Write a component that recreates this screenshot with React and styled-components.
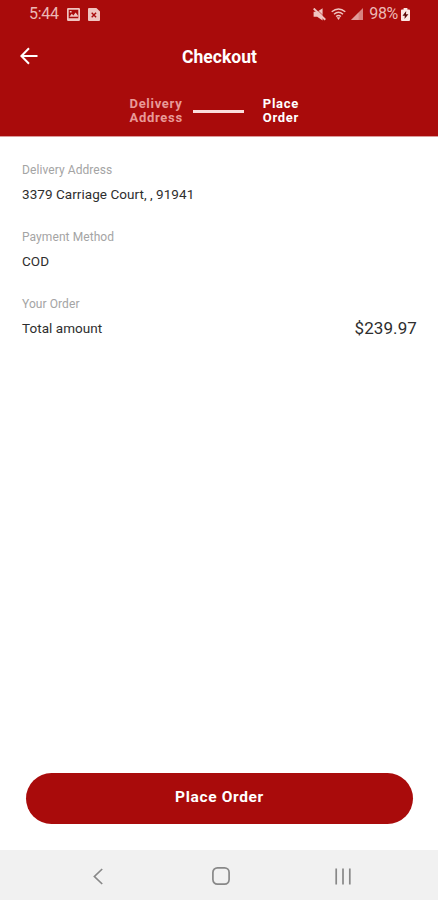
import React from 'react';
import styled, { createGlobalStyle } from 'styled-components';

const sections = [
  { id: 'address', title: 'Delivery Address', text: '3379 Carriage Court, , 91941' },
  { id: 'payment', title: 'Payment Method', text: 'COD' },
  { id: 'order', title: 'Your Order', text: 'Total amount', price: '$239.97' },
];

const StatusBar = () => (
  <StatusBarStyled>
    <StatusTextStyled>5:44</StatusTextStyled>
    <StatusIconStyled width="13" height="13" viewBox="0 0 13 13">
      <path
        fillRule="evenodd"
        d="M1.2 0h10.6A1.2 1.2 0 0 1 13 1.2v10.6a1.2 1.2 0 0 1-1.2 1.2H1.2A1.2 1.2 0 0 1 0 11.8V1.2A1.2 1.2 0 0 1 1.2 0zM1.7 1.7v8.6h9.6V1.7z"
      />
      <path d="M2.4 8.8 4.8 5.8l1.6 1.7 2.2-3 2.3 3v1.3zM2.8 3h1.8v1.6H2.8z" />
    </StatusIconStyled>
    <StatusIconStyled width="12" height="13" viewBox="0 0 12 13">
      <path d="M1 0h7.4L12 3.4V12a1 1 0 0 1-1 1H1a1 1 0 0 1-1-1V1a1 1 0 0 1 1-1z" />
      <path d="m3.7 4.8 4.4 4.4M8.1 4.8 3.7 9.2" stroke="#a90b0b" strokeWidth="1.4" />
    </StatusIconStyled>
    <StatusIconsStyled>
      <svg width="13" height="13" viewBox="0 0 13 13">
        <path d="M.6 3.8h3.6L9.6.2v12.300L4.200 8.800H.6z" />
        <path d="M2.200 0 13 10.400" stroke="#a90b0b" strokeWidth=".7" />
        <path d="M.7.5 12.300 11.700" stroke="#f0c4c0" strokeWidth="1.900" />
      </svg>
      <WifiIconStyled width="15" height="13" viewBox="0 0 15 13">
        <g fill="none" stroke="#f0c4c0" strokeWidth="1.4">
          <path d="M.7 3.8Q7.5-1.9 14.3 3.8" />
          <path d="M3 6.2Q7.5 2.2 12 6.2" />
          <path d="M5.1 8.5Q7.5 6.3 9.9 8.5" />
        </g>
        <path d="M5.6 9.3h3.8L7.5 12z" />
      </WifiIconStyled>
      <SignalIconStyled width="12" height="12" viewBox="0 0 12 12">
        <path d="M12 0v12H0z" opacity=".65" />
        <path d="M7.6 4.4V12H0z" opacity=".4" />
      </SignalIconStyled>
      <StatusTextStyled>98%</StatusTextStyled>
      <BatteryIconStyled width="9" height="13" viewBox="0 0 9 13">
        <path fill="#fbe6e3" d="M2.6 0h3.8v1.4H8a1 1 0 0 1 1 1V12a1 1 0 0 1-1 1H1a1 1 0 0 1-1-1V2.4a1 1 0 0 1 1-1h1.6z" />
        <path fill="#5c0808" d="M5.2 2.9 1.5 7.8h2.3L3.5 11l3.9-4.7H5z" />
      </BatteryIconStyled>
    </StatusIconsStyled>
  </StatusBarStyled>
);

const App = () => (
  <>
    <GlobalStyle />
    <ScreenStyled>
      <HeaderStyled>
        <StatusBar />
        <TitleRowStyled>
          <BackButtonStyled aria-label="Back">
            <svg width="18" height="18" viewBox="0 0 18 18" fill="none" stroke="#fff" strokeWidth="2">
              <path d="M17.5 9H1.7M9 1.2 1.4 9 9 16.8" />
            </svg>
          </BackButtonStyled>
          <TitleStyled>Checkout</TitleStyled>
        </TitleRowStyled>
        <StepsStyled>
          <StepStyled>Delivery<br />Address</StepStyled>
          <StepLineStyled />
          <StepStyled isActive>Place<br />Order</StepStyled>
        </StepsStyled>
      </HeaderStyled>

      <ContentStyled>
        {sections.map((section) => (
          <SectionStyled key={section.id}>
            <LabelStyled>{section.title}</LabelStyled>
            <RowStyled>
              <ValueStyled>{section.text}</ValueStyled>
              {section.price && <PriceStyled>{section.price}</PriceStyled>}
            </RowStyled>
          </SectionStyled>
        ))}
      </ContentStyled>

      <OrderButtonStyled>Place Order</OrderButtonStyled>

      <NavBarStyled>
        <svg width="10" height="17" viewBox="0 0 10 17">
          <path d="M9.2 1 1.4 8.5l7.8 7.5" />
        </svg>
        <HomeIconStyled width="18" height="18" viewBox="0 0 18 18">
          <rect x=".9" y=".9" width="16.2" height="16.2" rx="4.5" />
        </HomeIconStyled>
        <svg width="16" height="17" viewBox="0 0 16 17">
          <path d="M1.2.5v16M8 .5v16M14.8.5v16" />
        </svg>
      </NavBarStyled>
    </ScreenStyled>
  </>
);

const GlobalStyle = createGlobalStyle`
  * {
    box-sizing: border-box;
  }

  body {
    margin: 0;
    background: #fff;
    font-family: Roboto, "Liberation Sans", sans-serif;
  }
`;

const ScreenStyled = styled.div`
  display: flex;
  flex-direction: column;
  width: 438px;
  height: 900px;
  background: #fff;
`;

const HeaderStyled = styled.header`
  height: 136px;
  flex-shrink: 0;
  background: #a90b0b;
  box-shadow: 0 1px 0 #dc9a9a;
`;

const StatusBarStyled = styled.div`
  display: flex;
  align-items: center;
  height: 28px;
  padding: 0 28px 0 29px;
  fill: #f0c4c0;
`;

const StatusTextStyled = styled.span`
  font-size: 16px;
  line-height: 28px;
  letter-spacing: -.3px;
  color: #ecb9b5;
`;

const StatusIconStyled = styled.svg`
  margin-left: 8px;
`;

const StatusIconsStyled = styled.div`
  display: flex;
  align-items: center;
  margin-left: auto;
`;

const WifiIconStyled = styled.svg`
  margin-left: 5px;
`;

const SignalIconStyled = styled.svg`
  margin: 0 6px 0 5px;
`;

const BatteryIconStyled = styled.svg`
  margin-left: 3px;
`;

const TitleRowStyled = styled.div`
  display: grid;
  grid-template-columns: 58px 1fr 58px;
  align-items: center;
  height: 56px;
`;

const BackButtonStyled = styled.button`
  display: flex;
  padding: 0 0 0 20px;
  border: 0;
  background: none;
`;

const TitleStyled = styled.h1`
  margin: 0;
  padding: 2px 0 0 1px;
  font-size: 17.5px;
  font-weight: 700;
  line-height: 22px;
  text-align: center;
  color: #fff;
`;

const StepsStyled = styled.div`
  display: flex;
  align-items: center;
  height: 54px;
  padding-left: 129.5px;
`;

const StepStyled = styled.div`
  font-size: 13px;
  font-weight: 700;
  line-height: 14px;
  letter-spacing: .7px;
  color: ${({ isActive }) => isActive ? '#fff' : '#e89a98'};
`;

const StepLineStyled = styled.div`
  width: 51px;
  height: 3px;
  margin: 0 18.5px 0 10.5px;
  background: #fbdedc;
`;

const ContentStyled = styled.main`
  flex: 1;
  padding: 25px 21px 0 22px;
`;

const SectionStyled = styled.section`
  height: 67px;
`;

const LabelStyled = styled.div`
  font-size: 12px;
  line-height: 18px;
  letter-spacing: .08px;
  color: #a4a4a4;
`;

const RowStyled = styled.div`
  display: flex;
  justify-content: space-between;
  align-items: center;
  height: 30px;
`;

const ValueStyled = styled.span`
  font-size: 13.5px;
  letter-spacing: .05px;
  color: #2e2e2e;
`;

const PriceStyled = styled.span`
  font-size: 17px;
  letter-spacing: .1px;
  color: #2e2e2e;
`;

const OrderButtonStyled = styled.button`
  height: 51px;
  margin: 0 25px 26.5px 26px;
  padding: 0 0 2px;
  flex-shrink: 0;
  border: 0;
  border-radius: 26px;
  background: #a90b0b;
  font-family: inherit;
  font-size: 15.5px;
  font-weight: 700;
  letter-spacing: .65px;
  color: #fff;
`;

const NavBarStyled = styled.nav`
  display: flex;
  justify-content: space-between;
  align-items: center;
  height: 50px;
  padding: 2px 87px 0 93px;
  flex-shrink: 0;
  background: #f1f1f1;
  fill: none;
  stroke: #888;
  stroke-width: 1.7;
`;

const HomeIconStyled = styled.svg`
  margin-left: 3px;
`;

export default App;
